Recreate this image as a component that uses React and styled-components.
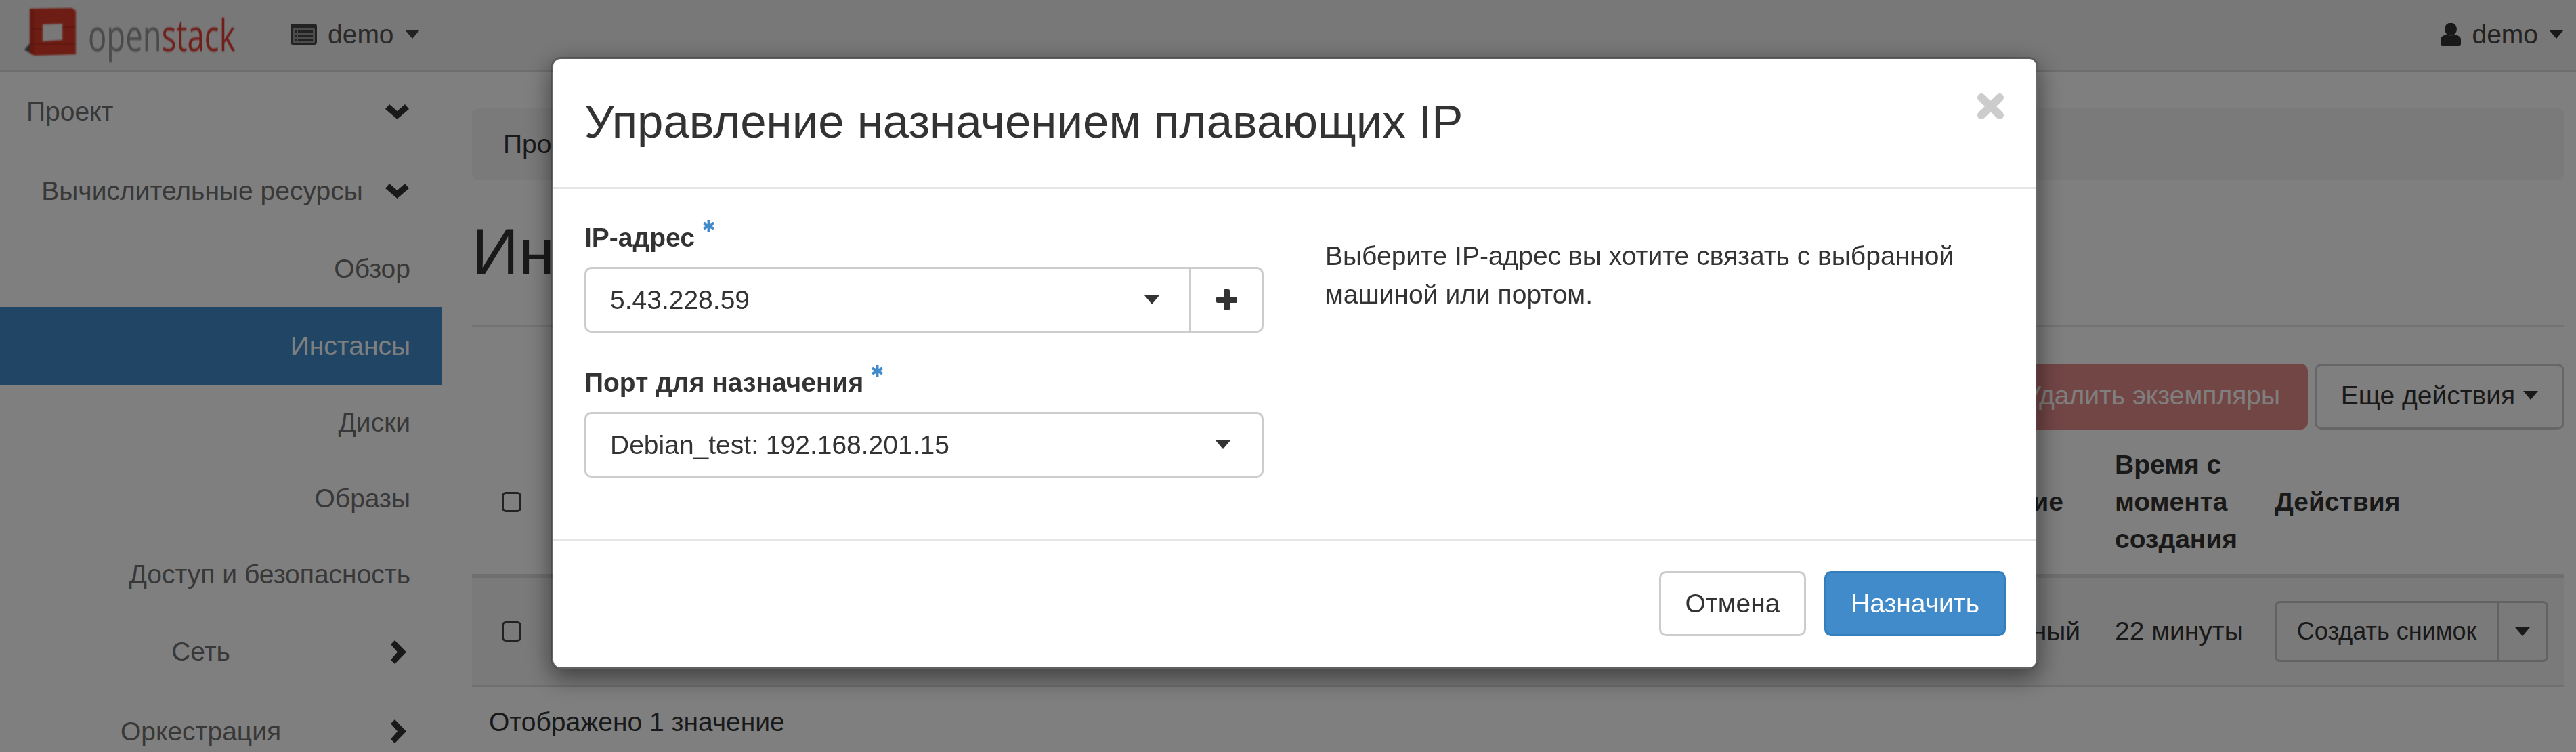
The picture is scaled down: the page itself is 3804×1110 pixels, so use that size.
import React from 'react'
import styled, { createGlobalStyle } from 'styled-components'

const GlobalStyle = createGlobalStyle`
    * { box-sizing: border-box; }
    html, body { margin: 0; padding: 0; background: #fff; }
    body {
        font-family: "Liberation Sans", Arial, sans-serif;
        font-size: 39px;
        line-height: 48px;
        color: #333;
        overflow: hidden;
    }
`

const Page = styled.div`
    width: 3804px;
    height: 1110px;
    overflow: hidden;
`

/* navbar */
const Navbar = styled.header`
    display: flex;
    align-items: center;
    height: 107px;
    padding: 0 18px 3px 44px;
    background: #f0f0f0;
    border-bottom: 3px solid #dcdcdc;
`

const LogoMark = styled.svg`
    width: 76px;
    height: 72px;
    margin: -6px 0 0 -8px;
    filter: blur(1px);
`

const LogoText = styled.div`
    width: 217px;
    margin-left: 18px;
    font-family: "Open Sans", sans-serif;
    font-size: 65px;
    line-height: 80px;
    white-space: nowrap;
    color: #959595;
    transform: scaleX(0.7);
    transform-origin: left center;
    filter: blur(1px);
    span { color: #e03c34; }
`

const NavMenu = styled.div`
    display: flex;
    align-items: center;
    margin-left: ${p => p.$auto ? 'auto' : '82px'};
    color: ${p => p.$auto ? '#444' : '#555'};
    gap: 16px;
`

const Caret = styled.span`
    display: inline-block;
    width: 0;
    height: 0;
    margin-left: ${p => p.$gap || 0}px;
    border-top: ${p => p.$h || 13}px solid ${p => p.$color || '#333'};
    border-left: ${p => p.$w || 11}px solid transparent;
    border-right: ${p => p.$w || 11}px solid transparent;
`

/* sidebar and main */
const Body = styled.div`
    display: flex;
`

const Sidebar = styled.nav`
    flex: none;
    width: 652px;
`

const NavRow = styled.a`
    display: flex;
    align-items: center;
    height: ${p => p.$h}px;
    padding: 0 ${p => p.$chevron ? 48 : 46}px 0 ${p => p.$left}px;
    color: ${p => p.$active ? '#fff' : '#707070'};
    background: ${p => p.$active ? '#428bca' : 'transparent'};
`

const NavLabel = styled.span`
    flex: 1;
    white-space: nowrap;
    text-align: ${p => p.$align};
`

const ChevronBox = styled.span`
    display: flex;
    justify-content: center;
    flex: none;
    width: 35px;
    margin-left: ${p => p.$gap}px;
`

const Main = styled.main`
    flex: 1;
    min-width: 0;
    padding: 53px 17px 0 45px;
`

const Breadcrumb = styled.div`
    height: 106px;
    padding-left: 46px;
    line-height: 106px;
    background: #f5f5f5;
    border-radius: 10px;
`

const PageTitle = styled.h1`
    height: 217px;
    margin: 0;
    font-size: 96px;
    font-weight: 400;
    line-height: 212px;
    border-bottom: 3px solid #e6e6e6;
`

const Toolbar = styled.div`
    display: flex;
    justify-content: flex-end;
    gap: 10px;
    margin-top: 54px;
`

const ToolButton = styled.button`
    display: flex;
    align-items: center;
    justify-content: center;
    height: 97px;
    width: ${p => p.$w ? `${p.$w}px` : 'auto'};
    padding: 0 ${p => p.$w ? 0 : 38}px 4px;
    font: inherit;
    white-space: nowrap;
    border-radius: 10px;
    color: ${p => p.$danger ? '#fff' : '#333'};
    background: ${p => p.$danger ? '#e68c8c' : '#fff'};
    border: 3px solid ${p => p.$danger ? '#e68c8c' : '#ccc'};
`

const TableRow = styled.div`
    display: grid;
    grid-template-columns: 98px 1fr 236px 428px;
    align-items: center;
    height: ${p => p.$h}px;
    background: ${p => p.$striped ? '#f4f4f4' : 'transparent'};
    border-bottom: ${p => p.$border}px solid #dedede;
    font-weight: ${p => p.$head ? 700 : 400};
    line-height: ${p => p.$head ? 55 : 48}px;
`

const CheckCell = styled.div`
    display: flex;
    padding-left: 44px;
`

const RowCheck = styled.input`
    appearance: none;
    width: 29px;
    height: 30px;
    margin: 0;
    border: 3px solid #444;
    border-radius: 6px;
`

const StatusCell = styled.div`
    padding-right: ${p => p.$pad}px;
    text-align: right;
`

const ActionGroup = styled.div`
    display: flex;
    width: 404px;
    height: 90px;
    font-size: 36px;
    white-space: nowrap;
    border: 3px solid #c4c4c4;
    border-radius: 8px;
`

const ActionMain = styled.div`
    display: flex;
    align-items: center;
    justify-content: center;
    width: 328px;
    border-right: 3px solid #c4c4c4;
`

const ActionToggle = styled.div`
    display: flex;
    align-items: center;
    justify-content: center;
    flex: 1;
`

const TableInfo = styled.div`
    margin-top: 28px;
    padding-left: 25px;
`

/* modal */
const Overlay = styled.div`
    position: fixed;
    inset: 0;
    background: rgba(0, 0, 0, 0.5);
`

const Modal = styled.section`
    position: fixed;
    top: 84px;
    left: 814px;
    width: 2196px;
    height: 904px;
    display: flex;
    flex-direction: column;
    background: #fff;
    background-clip: padding-box;
    border: 3px solid rgba(0, 0, 0, 0.2);
    border-radius: 14px;
    box-shadow: 0 12px 36px rgba(0, 0, 0, 0.5);
`

const ModalHeader = styled.div`
    display: flex;
    align-items: flex-start;
    justify-content: space-between;
    height: 192px;
    padding: 0 47px 0 46px;
    border-bottom: 3px solid #e5e5e5;
`

const ModalTitle = styled.h3`
    margin: 0;
    font-size: 69px;
    font-weight: 400;
    line-height: 186px;
`

const CloseIcon = styled.svg`
    width: 41px;
    height: 38px;
    margin-top: 51px;
`

const ModalBody = styled.div`
    display: flex;
    height: 519px;
    padding: 48px 46px 0;
    border-bottom: 3px solid #e5e5e5;
`

const FormColumn = styled.div`
    flex: none;
    width: 1003px;
`

const FieldLabel = styled.label`
    display: flex;
    align-items: flex-start;
    height: 48px;
    font-weight: 700;
`

const Required = styled.svg`
    width: 17px;
    height: 17px;
    margin: -2px 0 0 12px;
`

const Field = styled.div`
    margin-bottom: 50px;
`

const InputGroup = styled.div`
    display: flex;
    height: 97px;
    margin-top: 19px;
`

const SelectBox = styled.div`
    display: flex;
    align-items: center;
    justify-content: space-between;
    flex: 1;
    padding: 0 ${p => p.$addon ? 44 : 46}px 0 35px;
    border: 3px solid #ccc;
    border-radius: ${p => p.$addon ? '10px 0 0 10px' : '10px'};
`

const AddonButton = styled.div`
    display: flex;
    align-items: center;
    justify-content: center;
    flex: none;
    width: 107px;
    border: 3px solid #ccc;
    border-left: 0;
    border-radius: 0 10px 10px 0;
`

const HelpText = styled.p`
    width: 960px;
    margin: 22px 0 0 91px;
    line-height: 57px;
`

const ModalFooter = styled.div`
    display: flex;
    justify-content: flex-end;
    gap: 27px;
    padding: 45px 45px 0 0;
`

const FooterButton = styled.button`
    height: 96px;
    width: ${p => p.$w}px;
    padding: 0;
    font: inherit;
    border-radius: 10px;
    color: ${p => p.$primary ? '#fff' : '#333'};
    background: ${p => p.$primary ? '#428bca' : '#fff'};
    border: 3px solid ${p => p.$primary ? '#357ebd' : '#ccc'};
`

const ChevronDown = () => (
    <svg width="35" height="22" viewBox="0 0 35 22"><path fill="#333" d="M0 7 6 0 17.5 10 29 0 35 7 17.5 22Z" /></svg>
)

const ChevronRight = () => (
    <svg width="27" height="35" viewBox="-4 0 27 35"><path fill="#333" d="M6 0 23 17.5 6 35 0 29 10 17.5 0 6Z" /></svg>
)

const ListIcon = () => (
    <svg width="39" height="31" viewBox="0 0 39 31">
        <rect width="39" height="31" rx="4" fill="#444" />
        <rect x="3" y="7" width="33" height="21" rx="1" fill="#999" />
        <path fill="#444" d="M6 10h3v3H6zM11 10h22v3H11zM6 16h3v3H6zM11 16h22v3H11zM6 22h3v3H6zM11 22h22v3H11z" />
    </svg>
)

const UserIcon = () => (
    <svg width="30" height="34" viewBox="0 0 30 34">
        <ellipse cx="15" cy="9" rx="9" ry="9.5" fill="#333" />
        <path fill="#333" d="M0 31V24C0 20 5 18 9 16.5 12 19 18 19 21 16.5 25 18 30 20 30 24V31Q30 34 27 34H3Q0 34 0 31Z" />
    </svg>
)

const PlusIcon = () => (
    <svg width="31" height="31" viewBox="0 0 31 31"><path fill="#333" d="M11 2Q11 0 13 0H18Q20 0 20 2V11H29Q31 11 31 13V18Q31 20 29 20H20V29Q20 31 18 31H13Q11 31 11 29V20H2Q0 20 0 18V13Q0 11 2 11H11Z" /></svg>
)

const Star = () => (
    <Required viewBox="0 0 17 17">
        <path stroke="#428bca" strokeWidth="4" d="M8.5 0V17M1 4.2 16 12.8M16 4.2 1 12.8" />
    </Required>
)

const menu = [
    { label: 'Проект', h: 116, left: 39, align: 'left', icon: 'down', gap: 0 },
    { label: 'Вычислительные ресурсы', h: 117, left: 61, align: 'center', icon: 'down', gap: 33 },
    { label: 'Обзор', h: 113, left: 61, align: 'right' },
    { label: 'Инстансы', h: 115, left: 61, align: 'right', active: true },
    { label: 'Диски', h: 112, left: 61, align: 'right' },
    { label: 'Образы', h: 112, left: 61, align: 'right' },
    { label: 'Доступ и безопасность', h: 111, left: 61, align: 'right' },
    { label: 'Сеть', h: 118, left: 61, align: 'center', icon: 'right', gap: 37 },
    { label: 'Оркестрация', h: 117, left: 61, align: 'center', icon: 'right', gap: 37 },
]

export default function App() {
    return (
        <Page>
            <GlobalStyle />
            <Navbar>
                <LogoMark viewBox="0 0 76 72">
                    <path fill="#555" d="M0 62 8 52V66Z" />
                    <path fill="#dc3a28" fillRule="evenodd" d="M8 1 70 0 76 4V68L16 70 8 66ZM27 24V49L56 47V23Z" />
                    <path fill="#c8301f" d="M8 1 14 4V70L8 66Z" />
                    <path stroke="#b82a1c" strokeWidth="2" d="M8 31H27M56 28H76M8 53H76" />
                </LogoMark>
                <LogoText>open<span>stack</span></LogoText>
                <NavMenu>
                    <ListIcon />
                    demo
                    <Caret $color="#444" />
                </NavMenu>
                <NavMenu $auto>
                    <UserIcon />
                    demo
                    <Caret $color="#333" />
                </NavMenu>
            </Navbar>
            <Body>
                <Sidebar>
                    {menu.map(item => (
                        <NavRow key={item.label} $h={item.h} $left={item.left} $active={item.active} $chevron={!!item.icon}>
                            <NavLabel $align={item.align}>{item.label}</NavLabel>
                            {item.icon && (
                                <ChevronBox $gap={item.gap}>
                                    {item.icon === 'down' ? <ChevronDown /> : <ChevronRight />}
                                </ChevronBox>
                            )}
                        </NavRow>
                    ))}
                </Sidebar>
                <Main>
                    <Breadcrumb>Проект</Breadcrumb>
                    <PageTitle>Инстансы</PageTitle>
                    <Toolbar>
                        <ToolButton $danger>Удалить экземпляры</ToolButton>
                        <ToolButton $w={369}>Еще действия<Caret $gap={12} /></ToolButton>
                    </Toolbar>
                    <TableRow $head $h={219} $border={6}>
                        <CheckCell><RowCheck type="checkbox" /></CheckCell>
                        <StatusCell $pad={76}>Питание</StatusCell>
                        <div>Время с<br />момента<br />создания</div>
                        <div>Действия</div>
                    </TableRow>
                    <TableRow $striped $h={161} $border={3}>
                        <CheckCell><RowCheck type="checkbox" /></CheckCell>
                        <StatusCell $pad={51}>Активный</StatusCell>
                        <div>22 минуты</div>
                        <ActionGroup>
                            <ActionMain>Создать снимок</ActionMain>
                            <ActionToggle><Caret $color="#333" /></ActionToggle>
                        </ActionGroup>
                    </TableRow>
                    <TableInfo>Отображено 1 значение</TableInfo>
                </Main>
            </Body>
            <Overlay />
            <Modal>
                <ModalHeader>
                    <ModalTitle>Управление назначением плавающих IP</ModalTitle>
                    <CloseIcon viewBox="0 0 41 38">
                        <path stroke="#ccc" strokeWidth="12" strokeLinecap="round" d="M7 6 34 32M34 6 7 32" />
                    </CloseIcon>
                </ModalHeader>
                <ModalBody>
                    <FormColumn>
                        <Field>
                            <FieldLabel>IP-адрес<Star /></FieldLabel>
                            <InputGroup>
                                <SelectBox $addon>5.43.228.59<Caret /></SelectBox>
                                <AddonButton><PlusIcon /></AddonButton>
                            </InputGroup>
                        </Field>
                        <Field>
                            <FieldLabel>Порт для назначения<Star /></FieldLabel>
                            <InputGroup>
                                <SelectBox>Debian_test: 192.168.201.15<Caret /></SelectBox>
                            </InputGroup>
                        </Field>
                    </FormColumn>
                    <HelpText>Выберите IP-адрес вы хотите связать с выбранной машиной или портом.</HelpText>
                </ModalBody>
                <ModalFooter>
                    <FooterButton $w={217}>Отмена</FooterButton>
                    <FooterButton $primary $w={268}>Назначить</FooterButton>
                </ModalFooter>
            </Modal>
        </Page>
    )
}
